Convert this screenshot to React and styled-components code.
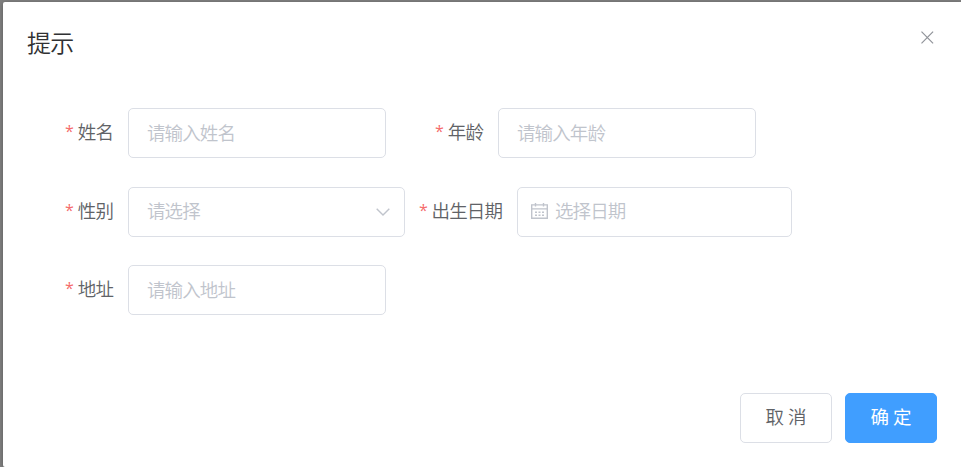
import React from 'react';
import styled, { createGlobalStyle } from 'styled-components';

const GlobalStyle = createGlobalStyle`
  * {
    box-sizing: border-box;
  }
  body {
    margin: 0;
    overflow: hidden;
    background: #7f7f7f;
    font-family: 'Noto Sans CJK SC', sans-serif;
  }
  button,
  input {
    font-family: inherit;
  }
`;

const Overlay = styled.div`
  height: 467px;
  padding: 2px 0 0 3px;
  background: #7f7f7f;
`;

const Dialog = styled.div`
  display: flex;
  flex-direction: column;
  height: 465px;
  background: #fff;
  border-radius: 2px 0 0 2px;
  box-shadow: 0 1px 4px rgba(0, 0, 0, 0.3);
`;

const Header = styled.div`
  display: flex;
  justify-content: space-between;
  padding: 25px 27px 0 24px;
  height: 106px;
`;

const Title = styled.span`
  color: #303133;
  font-size: 24px;
  font-weight: 350;
  letter-spacing: -0.8px;
  line-height: 30px;
`;

const CloseButton = styled.button`
  width: 14px;
  height: 14px;
  margin-top: 4px;
  padding: 0;
  border: 0;
  background: none;
  color: #909399;
  svg {
    display: block;
  }
`;

const Form = styled.form`
  display: grid;
  grid-template-rows: 50px 50px 50px;
  row-gap: 28.5px;
  padding-left: 62px;
`;

const Row = styled.div`
  display: flex;
  gap: ${props => props.$gap || 0}px;
`;

const Item = styled.div`
  display: flex;
`;

const Label = styled.label`
  display: flex;
  justify-content: space-between;
  width: ${props => props.$width}px;
  padding-right: 15px;
  color: #606266;
  font-size: 18.5px;
  font-weight: 350;
  letter-spacing: -0.9px;
  line-height: 47px;
  white-space: nowrap;
  &::before {
    content: '*';
    color: #f56c6c;
    font-family: 'Open Sans', sans-serif;
    font-size: 16px;
    font-weight: 400;
  }
`;

const Field = styled.div`
  display: flex;
  align-items: center;
  width: ${props => props.$width}px;
  height: 50px;
  padding: 0 14px 0 ${props => (props.$icon ? 13 : 18)}px;
  border: 1px solid #dcdfe6;
  border-radius: 5px;
  color: #c0c4cc;
  svg {
    flex: none;
  }
`;

const Input = styled.input`
  flex: 1;
  min-width: 0;
  height: 48px;
  padding: 0 0 3px;
  border: 0;
  outline: 0;
  background: none;
  color: #606266;
  font-size: 18.5px;
  font-weight: 350;
  letter-spacing: -0.9px;
  margin-left: ${props => (props.$icon ? 7 : 0)}px;
  &::placeholder {
    color: #c0c4cc;
  }
`;

const Footer = styled.div`
  display: flex;
  justify-content: flex-end;
  gap: 13px;
  margin-top: auto;
  padding: 0 24px 24px 0;
`;

const Button = styled.button`
  width: 92px;
  height: 50px;
  padding: 0 0 5px;
  border: 1px solid ${props => (props.$primary ? '#409eff' : '#dcdfe6')};
  border-radius: 5px;
  background: ${props => (props.$primary ? '#409eff' : '#fff')};
  color: ${props => (props.$primary ? '#fff' : '#606266')};
  font-size: 18.5px;
  font-weight: ${props => (props.$primary ? 400 : 350)};
`;

const CloseIcon = () => (
  <svg width="14" height="14" viewBox="0 0 14 14" fill="none" stroke="currentColor" strokeWidth="1.2">
    <path d="M1.5 .7l11.6 11.6M13.1 .7L1.5 12.3" />
  </svg>
);

const ArrowIcon = () => (
  <svg width="14" height="10" viewBox="0 0 14 10" fill="none" stroke="currentColor" strokeWidth="1.4">
    <path d="M.7 1.7L7 8l6.3-6.3" />
  </svg>
);

const CalendarIcon = () => (
  <svg width="17" height="17" viewBox="0 0 17 17" fill="none" stroke="currentColor" strokeWidth="1.4">
    <path d="M.7 1.9h15.6v13.4H.7zM.7 5.9h15.6M4.5 0v3.5M12.5 0v3.5" />
    <path d="M4 9.2h2M7.5 9.2h2M11 9.2h2M4 12.2h2M7.5 12.2h2M11 12.2h2" />
  </svg>
);

const FormItem = ({ label, labelWidth, width, placeholder, icon, suffix }) => (
  <Item>
    <Label $width={labelWidth}>{label}</Label>
    <Field $width={width} $icon={!!icon}>
      {icon}
      <Input $icon={!!icon} placeholder={placeholder} aria-label={label} />
      {suffix}
    </Field>
  </Item>
);

const App = () => {
  return (
    <>
      <GlobalStyle />
      <Overlay>
        <Dialog role="dialog">
          <Header>
            <Title>提示</Title>
            <CloseButton aria-label="Close">
              <CloseIcon />
            </CloseButton>
          </Header>
          <Form>
            <Row $gap={49}>
              <FormItem label="姓名" labelWidth={63} width={258} placeholder="请输入姓名" />
              <FormItem label="年龄" labelWidth={63} width={258} placeholder="请输入年龄" />
            </Row>
            <Row $gap={14}>
              <FormItem label="性别" labelWidth={63} width={277} placeholder="请选择" suffix={<ArrowIcon />} />
              <FormItem
                label="出生日期"
                labelWidth={98}
                width={275}
                placeholder="选择日期"
                icon={<CalendarIcon />}
              />
            </Row>
            <Row>
              <FormItem label="地址" labelWidth={63} width={258} placeholder="请输入地址" />
            </Row>
          </Form>
          <Footer>
            <Button>取 消</Button>
            <Button $primary>确 定</Button>
          </Footer>
        </Dialog>
      </Overlay>
    </>
  );
};

export default App;
